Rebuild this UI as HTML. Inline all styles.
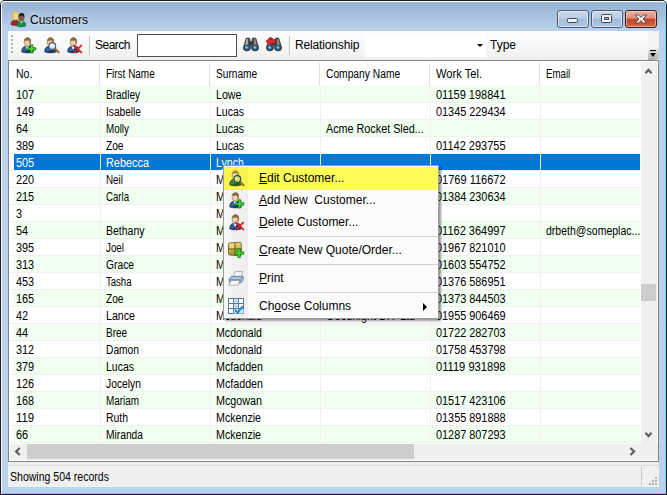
<!DOCTYPE html>
<html><head><meta charset="utf-8"><title>Customers</title>
<style>
html,body{margin:0;padding:0;}
body{width:667px;height:495px;overflow:hidden;background:#fff;font-family:"Liberation Sans",sans-serif;font-size:12px;color:#000;position:relative;}
*{box-sizing:border-box;}
.ic{position:absolute;overflow:visible;}
#win{position:absolute;left:0;top:0;width:667px;height:495px;background:#1c1c1c;border-radius:5px 5px 0 0;overflow:hidden;}
#frame{position:absolute;left:1px;top:1px;width:665px;height:493px;border-radius:4px 4px 0 0;background:linear-gradient(180deg,#97b3d4 0,#9fbad9 8px,#a9c2df 16px,#b3cce8 24px,#b9d2ec 30px,#bad2eb 100%);}
#frame:before{content:"";position:absolute;left:0;top:0;right:0;bottom:0;border-radius:4px 4px 0 0;border-top:1px solid #fff;border-left:1px solid #fdfeff;border-right:1px solid #6fdcff;border-bottom:1px solid #52d6ff;}
#title{position:absolute;left:30px;top:12px;font-size:12px;line-height:16px;color:#000;text-shadow:0 0 6px rgba(255,255,255,.75),0 0 10px rgba(255,255,255,.5);}
.tb{position:absolute;top:10px;height:18px;width:32px;border:1px solid #4b5a72;border-radius:3px;background:linear-gradient(180deg,#c6d7ec 0,#bccfe8 45%,#a3bcdb 50%,#adc5e1 100%);box-shadow:inset 0 0 0 1px rgba(255,255,255,.55);}
#bclose{background:linear-gradient(180deg,#e8b3a4 0,#dc8f7b 45%,#c3431f 50%,#cd6a4c 100%);border-color:#431a1c;width:32px;box-shadow:inset 0 0 0 1px rgba(255,220,210,.55);}
#client{position:absolute;left:8px;top:31px;width:651px;height:456px;background:#f0f0f0;}
#toolbar{position:absolute;left:0;top:0;width:651px;height:29px;background:linear-gradient(180deg,#fdfdfd 0,#f8f8f8 50%,#efefef 100%);}
.tsep{position:absolute;top:5px;width:2px;height:19px;border-left:1px solid #c2c2c2;border-right:1px solid #fff;}
.tl{position:absolute;top:6px;line-height:16px;font-size:12px;white-space:nowrap;}
#grid{position:absolute;left:0;top:29px;width:651px;height:402px;border:1px solid #7f848c;background:#fff;overflow:hidden;font-size:12px;}
#hdr{position:absolute;left:0;top:0;width:632px;height:25px;background:#fff;}
.h{position:absolute;top:0;height:25px;line-height:27px;padding-left:6px;white-space:nowrap;overflow:hidden;}
.h:after{content:"";position:absolute;right:0;top:2px;bottom:0;width:1px;background:#dfdfdf;}
.r{position:absolute;left:0;width:632px;height:17px;border-bottom:1px solid #f0f0f0;background:#fff;}
.r.g .c{background:#f0fff0;}
.r.sel .c{background:#0078d7;color:#fff;border-right-color:#e9e9e9;}
.c{position:absolute;top:0;height:16px;line-height:19px;padding-left:5px;white-space:nowrap;overflow:hidden;border-right:1px solid #f0f0f0;}
.t{display:inline-block;transform:scaleX(.85);transform-origin:0 50%;white-space:nowrap;}
.h0{left:0;width:91px;}
.h1{left:91px;width:110px;}
.h2{left:201px;width:110px;}
.h3{left:311px;width:110px;}
.h4{left:421px;width:110px;}
.h5{left:531px;width:100px;}
.h5:after{display:none;}
.c0{left:5px;width:87px;}
.c1{left:92px;width:110px;}
.c2{left:202px;width:110px;}
.c3{left:312px;width:110px;}
.c4{left:422px;width:110px;}
.c5{left:532px;width:99px;border-right:0 !important;}
.c0{padding-left:2px;}
.c0 .t,.c4 .t{transform:scaleX(.91);}
.h0{padding-left:7px;}
#vs{position:absolute;left:632px;top:1px;width:16px;height:381px;background:#f0f0f0;}
#hs{position:absolute;left:1px;top:383px;width:631px;height:16px;background:#f0f0f0;}
#corner{position:absolute;left:632px;top:382px;width:17px;height:17px;background:#f0f0f0;}
#status{position:absolute;left:0;top:434px;width:651px;height:22px;border-top:1px solid #d9d9d9;font-size:12px;line-height:22px;padding-left:2px;}
#menu{position:absolute;left:223px;top:165px;width:216px;height:154px;background:#fcfcfc;border:1px solid #9a9a9a;box-shadow:2px 2px 2px rgba(0,0,0,.4);}
#mw{position:absolute;left:0;top:1px;width:214px;height:151px;}
#gutter{position:absolute;left:0;top:0;width:24px;height:151px;background:linear-gradient(90deg,#f9f9f9 0,#f1f1f1 40%,#eeeeee 100%);}
.mi{position:absolute;left:35px;height:22px;line-height:22px;font-size:12px;white-space:nowrap;}
.sep{position:absolute;left:32px;width:182px;height:1px;background:#d2d2d2;}
#hl{position:absolute;left:0;top:0;width:214px;height:23px;background:linear-gradient(90deg,#f7f54d 0,#f7f54d 24px,#fefc56 24px,#fefc56 100%);}
u{text-decoration:underline;text-underline-offset:1px;}
</style></head><body>
<div id="win"><div id="frame"></div>
<svg class="ic" style="left:10px;top:11px" width="16" height="16" viewBox="0 0 16 16" ><path d="M1 13.6C.8 11 2 9.6 4.2 9.2L7 9.2C8.6 9.6 9.6 11 9.4 13.6C7 14.8 3 14.8 1 13.6Z" fill="#a3262a" stroke="#6a1216" stroke-width=".5"/><path d="M2.6 7.8C2 3.6 3 .8 5.6 .8C8 .8 9 3.4 8.6 7.6C8 9.2 3.2 9.4 2.6 7.8Z" fill="#f2d45a" stroke="#b8962a" stroke-width=".4"/><ellipse cx="6.3" cy="5.6" rx="1.9" ry="2.6" fill="#f3d2ae"/><path d="M6.6 15C6.4 12 8 10.6 10 10.2L12.8 10.2C14.8 10.6 16 12 15.8 15C13 16.2 9 16.2 6.6 15Z" fill="#1f8a4a" stroke="#0e5428" stroke-width=".5"/><path d="M10 10.3L11.4 12.6L12.8 10.3Z" fill="#e9f5ec"/><ellipse cx="11.5" cy="6.6" rx="2.7" ry="3.3" fill="#8a5a3a" stroke="#3a2414" stroke-width=".4"/><path d="M8.6 6.2C8.4 3.2 10 2 11.8 2C13.8 2 14.8 3.6 14.4 6C13.4 4.8 11.4 4.4 10 4.8C9.4 5.2 9 5.6 8.6 6.2Z" fill="#1c1a18"/></svg>
<div id="title">Customers</div>
<div class="tb" style="left:557px"><div style="position:absolute;left:9px;top:7px;width:11px;height:5px;border:1px solid #3d4656;border-radius:1.5px;background:#f4efec"></div></div>
<div class="tb" style="left:591px"><div style="position:absolute;left:9px;top:3px;width:11px;height:9px;border:1px solid #3d4656;border-radius:1.5px;background:#f6f6f6"><div style="position:absolute;left:2px;top:2px;width:5px;height:3px;border:1px solid #44506a;background:#8fb0de"></div></div></div>
<div class="tb" id="bclose" style="left:625px"><svg class="ic" style="left:8px;top:3px" width="14" height="10" viewBox="0 0 14 10"><path d="M1.2 1h3.4L7 3.3L9.4 1h3.4L9 5l3.8 4H9.4L7 6.7L4.600 9H1.2L5 5Z" fill="#f6f6f6" stroke="#4a3a3a" stroke-width=".9" stroke-linejoin="round"/></svg></div>
<div id="client">
 <div id="toolbar">
  <div style="position:absolute;left:3px;top:4px;width:2px;height:20px;background:repeating-linear-gradient(180deg,#b3b3b3 0,#b3b3b3 2px,transparent 2px,transparent 4px)"></div>
  <svg class="ic" style="left:13px;top:6px" width="16" height="16" viewBox="0 0 16 16" ><path d="M.7 14.9C.4 11.6 2.2 9.6 4.8 9.1L8.6 9.1C11.2 9.6 12.7 11.6 12.4 14.9C9 16.3 4 16.3 .7 14.9Z" fill="#143c6e" stroke="#0d2949" stroke-width=".5"/><path d="M1.3 14.2C1.2 12 2.4 10.4 4.2 9.8L5.4 13.6C4 14.6 2.6 14.6 1.3 14.2Z" fill="#4a86bd" opacity=".55"/><path d="M4.4 9.2L6.2 13.4L8 9.2Z" fill="#f6f8fb"/><ellipse cx="6.4" cy="4.9" rx="3.2" ry="4.1" fill="#efd2aa" stroke="#7a5c38" stroke-width=".6"/><path d="M3.3 4.2C3.2 1.6 4.8 .6 6.6 .6C8.800 .6 10 2.2 9.7 4.8C9.6 6.2 9.3 7.2 8.6 8C8.800 6.400 8.6 4.6 8 3.4C6.6 3.6 4.6 3.4 3.3 4.2Z" fill="#84683a"/><path d="M9.600 7.800h2.2v3h3v2.2h-3v3h-2.2v-3h-3v-2.2h3z" fill="#48dc30" stroke="#1b7a16" stroke-width=".9" stroke-linejoin="round"/></svg><svg class="ic" style="left:36px;top:6px" width="16" height="16" viewBox="0 0 16 16" ><path d="M.7 14.9C.4 11.6 2.2 9.6 4.8 9.1L8.6 9.1C11.2 9.6 12.7 11.6 12.4 14.9C9 16.3 4 16.3 .7 14.9Z" fill="#143c6e" stroke="#0d2949" stroke-width=".5"/><path d="M1.3 14.2C1.2 12 2.4 10.4 4.2 9.8L5.4 13.6C4 14.6 2.6 14.6 1.3 14.2Z" fill="#4a86bd" opacity=".55"/><path d="M4.4 9.2L6.2 13.4L8 9.2Z" fill="#f6f8fb"/><ellipse cx="6.4" cy="4.9" rx="3.2" ry="4.1" fill="#efd2aa" stroke="#7a5c38" stroke-width=".6"/><path d="M3.3 4.2C3.2 1.6 4.8 .6 6.6 .6C8.800 .6 10 2.2 9.7 4.8C9.6 6.2 9.3 7.2 8.6 8C8.800 6.400 8.6 4.6 8 3.4C6.6 3.6 4.6 3.4 3.3 4.2Z" fill="#84683a"/><path d="M10.6 11.6L14.6 15.2" stroke="#9a6a2e" stroke-width="2.1" stroke-linecap="round"/><circle cx="8.3" cy="9" r="3.4" fill="#d6eaf8" stroke="#4d5a68" stroke-width="1.1"/><circle cx="7.6" cy="8.2" r="1.5" fill="#fff" opacity=".85"/></svg><svg class="ic" style="left:59px;top:6px" width="16" height="16" viewBox="0 0 16 16" ><path d="M.7 14.9C.4 11.6 2.2 9.6 4.8 9.1L8.6 9.1C11.2 9.6 12.7 11.6 12.4 14.9C9 16.3 4 16.3 .7 14.9Z" fill="#143c6e" stroke="#0d2949" stroke-width=".5"/><path d="M1.3 14.2C1.2 12 2.4 10.4 4.2 9.8L5.4 13.6C4 14.6 2.6 14.6 1.3 14.2Z" fill="#4a86bd" opacity=".55"/><path d="M4.4 9.2L6.2 13.4L8 9.2Z" fill="#f6f8fb"/><ellipse cx="6.4" cy="4.9" rx="3.2" ry="4.1" fill="#efd2aa" stroke="#7a5c38" stroke-width=".6"/><path d="M3.3 4.2C3.2 1.6 4.8 .6 6.6 .6C8.800 .6 10 2.2 9.7 4.8C9.6 6.2 9.3 7.2 8.6 8C8.800 6.400 8.6 4.6 8 3.4C6.6 3.6 4.6 3.4 3.3 4.2Z" fill="#84683a"/><path d="M6.800 8.600L14.4 15.4M14.2 8.600L7 15.4" stroke="#df2029" stroke-width="1.9" stroke-linecap="round"/></svg><svg class="ic" style="left:235px;top:6px" width="16" height="16" viewBox="0 0 16 16" ><path d="M6.600 4.200H9.400V8.200H6.600Z" fill="#3a3a3a"/><path d="M3 1.800Q3.100 1 4 1H5.800Q6.700 1 6.800 1.800L7.600 10.600Q7.600 14 3.900 14Q.2 14 .3 10.600Z" fill="#4a4a48" stroke="#262624" stroke-width=".6"/><path d="M13 1.800Q12.900 1 12 1H10.200Q9.300 1 9.200 1.800L8.400 10.600Q8.400 14 12.100 14Q15.800 14 15.700 10.600Z" fill="#4a4a48" stroke="#262624" stroke-width=".6"/><path d="M3.700 2L2.200 8.200Q3.400 7.400 4.600 7.800L5 2Z" fill="#d2d2cc" opacity=".85"/><path d="M11 2L11.400 7.800Q12.600 7.400 13.800 8.200L12.300 2Z" fill="#a6a6a0" opacity=".8"/><circle cx="3.900" cy="10.800" r="2.300" fill="#2a80c4" stroke="#173f66" stroke-width=".6"/><circle cx="12.100" cy="10.800" r="2.300" fill="#2a80c4" stroke="#173f66" stroke-width=".6"/><circle cx="3.500" cy="10.300" r="1.100" fill="#8fd2fb"/><circle cx="11.700" cy="10.300" r="1.100" fill="#8fd2fb"/></svg><svg class="ic" style="left:258px;top:6px" width="16" height="16" viewBox="0 0 16 16" ><path d="M6.600 4.200H9.400V8.200H6.600Z" fill="#3a3a3a"/><path d="M3 1.800Q3.100 1 4 1H5.800Q6.700 1 6.800 1.800L7.600 10.600Q7.600 14 3.900 14Q.2 14 .3 10.600Z" fill="#4a4a48" stroke="#262624" stroke-width=".6"/><path d="M13 1.800Q12.900 1 12 1H10.200Q9.300 1 9.200 1.800L8.400 10.600Q8.400 14 12.100 14Q15.800 14 15.700 10.600Z" fill="#4a4a48" stroke="#262624" stroke-width=".6"/><path d="M3.700 2L2.200 8.200Q3.400 7.400 4.600 7.800L5 2Z" fill="#d2d2cc" opacity=".85"/><path d="M11 2L11.400 7.800Q12.600 7.400 13.800 8.200L12.300 2Z" fill="#a6a6a0" opacity=".8"/><circle cx="3.900" cy="10.800" r="2.300" fill="#2a80c4" stroke="#173f66" stroke-width=".6"/><circle cx="12.100" cy="10.800" r="2.300" fill="#2a80c4" stroke="#173f66" stroke-width=".6"/><circle cx="3.500" cy="10.300" r="1.100" fill="#8fd2fb"/><circle cx="11.700" cy="10.300" r="1.100" fill="#8fd2fb"/><path d="M-.2 4.300L4.400 .2V2.500H9V6.200H4.400V8.400Z" fill="#e3262d" stroke="#a0141a" stroke-width=".6"/></svg>
  <div class="tsep" style="left:81px"></div>
  <div class="tl" style="left:87px;letter-spacing:-.5px">Search</div>
  <div style="position:absolute;left:129px;top:3px;width:100px;height:23px;border:1px solid #4d4d4d;background:#fff"></div>
  <div class="tsep" style="left:281px"></div>
  <div class="tl" style="left:287px;letter-spacing:-.15px">Relationship</div>
  <div style="position:absolute;left:357px;top:3px;width:121px;height:23px;background:#fff"></div>
  <div style="position:absolute;left:469px;top:13px;width:0;height:0;border-left:3px solid transparent;border-right:3px solid transparent;border-top:3px solid #000"></div>
  <div class="tl" style="left:482px">Type</div>
  <div style="position:absolute;left:640px;top:0;width:11px;height:29px;background:#f3f3f3"></div>
  <div style="position:absolute;left:640px;top:18px;width:11px;height:11px;background:linear-gradient(180deg,#e4e4e4,#b0b0b0);border-radius:3px 0 4px 0"></div>
  <div style="position:absolute;left:642px;top:19px;width:6px;height:1px;background:#000"></div>
  <div style="position:absolute;left:642px;top:22px;width:0;height:0;border-left:3px solid transparent;border-right:3px solid transparent;border-top:4px solid #000"></div>
 </div>
 <div id="grid">
  <div id="hdr">
   <div class="h h0"><span class="t" style="transform:scaleX(0.877)">No.</span></div><div class="h h1"><span class="t" style="transform:scaleX(0.830)">First Name</span></div><div class="h h2"><span class="t" style="transform:scaleX(0.846)">Surname</span></div><div class="h h3"><span class="t" style="transform:scaleX(0.855)">Company Name</span></div><div class="h h4"><span class="t" style="transform:scaleX(0.928)">Work Tel.</span></div><div class="h h5"><span class="t" style="transform:scaleX(0.809)">Email</span></div>
  </div>
<div class="r g" style="top:25px"><div class="c c0"><span class="t" style="transform:scaleX(0.906)">107</span></div><div class="c c1"><span class="t" style="transform:scaleX(0.836)">Bradley</span></div><div class="c c2"><span class="t" style="transform:scaleX(0.889)">Lowe</span></div><div class="c c3"></div><div class="c c4"><span class="t" style="transform:scaleX(0.917)">01159 198841</span></div><div class="c c5"></div></div>
<div class="r" style="top:42px"><div class="c c0"><span class="t" style="transform:scaleX(0.906)">149</span></div><div class="c c1"><span class="t" style="transform:scaleX(0.846)">Isabelle</span></div><div class="c c2"><span class="t" style="transform:scaleX(0.874)">Lucas</span></div><div class="c c3"></div><div class="c c4"><span class="t" style="transform:scaleX(0.906)">01345 229434</span></div><div class="c c5"></div></div>
<div class="r g" style="top:59px"><div class="c c0"><span class="t" style="transform:scaleX(0.906)">64</span></div><div class="c c1"><span class="t" style="transform:scaleX(0.821)">Molly</span></div><div class="c c2"><span class="t" style="transform:scaleX(0.874)">Lucas</span></div><div class="c c3"><span class="t" style="transform:scaleX(0.899)">Acme Rocket Sled...</span></div><div class="c c4"></div><div class="c c5"></div></div>
<div class="r" style="top:76px"><div class="c c0"><span class="t" style="transform:scaleX(0.906)">389</span></div><div class="c c1"><span class="t" style="transform:scaleX(0.846)">Zoe</span></div><div class="c c2"><span class="t" style="transform:scaleX(0.874)">Lucas</span></div><div class="c c3"></div><div class="c c4"><span class="t" style="transform:scaleX(0.917)">01142 293755</span></div><div class="c c5"></div></div>
<div class="r g sel" style="top:93px"><div class="c c0"><span class="t" style="transform:scaleX(0.906)">505</span></div><div class="c c1"><span class="t" style="transform:scaleX(0.908)">Rebecca</span></div><div class="c c2"><span class="t" style="transform:scaleX(0.887)">Lynch</span></div><div class="c c3"></div><div class="c c4"></div><div class="c c5"></div></div>
<div class="r" style="top:110px"><div class="c c0"><span class="t" style="transform:scaleX(0.906)">220</span></div><div class="c c1"><span class="t" style="transform:scaleX(0.822)">Neil</span></div><div class="c c2"><span class="t" style="transform:scaleX(0.884)">Mcdonald</span></div><div class="c c3"></div><div class="c c4"><span class="t" style="transform:scaleX(0.917)">01769 116672</span></div><div class="c c5"></div></div>
<div class="r g" style="top:127px"><div class="c c0"><span class="t" style="transform:scaleX(0.906)">215</span></div><div class="c c1"><span class="t" style="transform:scaleX(0.802)">Carla</span></div><div class="c c2"><span class="t" style="transform:scaleX(0.884)">Mcdonald</span></div><div class="c c3"></div><div class="c c4"><span class="t" style="transform:scaleX(0.906)">01384 230634</span></div><div class="c c5"></div></div>
<div class="r" style="top:144px"><div class="c c0"><span class="t" style="transform:scaleX(0.904)">3</span></div><div class="c c1"></div><div class="c c2"><span class="t" style="transform:scaleX(0.884)">Mcdonald</span></div><div class="c c3"></div><div class="c c4"></div><div class="c c5"></div></div>
<div class="r g" style="top:161px"><div class="c c0"><span class="t" style="transform:scaleX(0.906)">54</span></div><div class="c c1"><span class="t" style="transform:scaleX(0.874)">Bethany</span></div><div class="c c2"><span class="t" style="transform:scaleX(0.884)">Mcdonald</span></div><div class="c c3"></div><div class="c c4"><span class="t" style="transform:scaleX(0.917)">01162 364997</span></div><div class="c c5"><span class="t" style="transform:scaleX(0.877)">drbeth@someplac...</span></div></div>
<div class="r" style="top:178px"><div class="c c0"><span class="t" style="transform:scaleX(0.906)">395</span></div><div class="c c1"><span class="t" style="transform:scaleX(0.817)">Joel</span></div><div class="c c2"><span class="t" style="transform:scaleX(0.884)">Mcdonald</span></div><div class="c c3"></div><div class="c c4"><span class="t" style="transform:scaleX(0.906)">01967 821010</span></div><div class="c c5"></div></div>
<div class="r g" style="top:195px"><div class="c c0"><span class="t" style="transform:scaleX(0.906)">313</span></div><div class="c c1"><span class="t" style="transform:scaleX(0.857)">Grace</span></div><div class="c c2"><span class="t" style="transform:scaleX(0.884)">Mcdonald</span></div><div class="c c3"></div><div class="c c4"><span class="t" style="transform:scaleX(0.906)">01603 554752</span></div><div class="c c5"></div></div>
<div class="r" style="top:212px"><div class="c c0"><span class="t" style="transform:scaleX(0.906)">453</span></div><div class="c c1"><span class="t" style="transform:scaleX(0.796)">Tasha</span></div><div class="c c2"><span class="t" style="transform:scaleX(0.884)">Mcdonald</span></div><div class="c c3"></div><div class="c c4"><span class="t" style="transform:scaleX(0.906)">01376 586951</span></div><div class="c c5"></div></div>
<div class="r g" style="top:229px"><div class="c c0"><span class="t" style="transform:scaleX(0.906)">165</span></div><div class="c c1"><span class="t" style="transform:scaleX(0.846)">Zoe</span></div><div class="c c2"><span class="t" style="transform:scaleX(0.884)">Mcdonald</span></div><div class="c c3"></div><div class="c c4"><span class="t" style="transform:scaleX(0.906)">01373 844503</span></div><div class="c c5"></div></div>
<div class="r" style="top:246px"><div class="c c0"><span class="t" style="transform:scaleX(0.906)">42</span></div><div class="c c1"><span class="t" style="transform:scaleX(0.887)">Lance</span></div><div class="c c2"><span class="t" style="transform:scaleX(0.884)">Mcdonald</span></div><div class="c c3"><span class="t" style="transform:scaleX(0.903)">Goodnight DIY Ltd</span></div><div class="c c4"><span class="t" style="transform:scaleX(0.906)">01955 906469</span></div><div class="c c5"></div></div>
<div class="r g" style="top:263px"><div class="c c0"><span class="t" style="transform:scaleX(0.906)">44</span></div><div class="c c1"><span class="t" style="transform:scaleX(0.828)">Bree</span></div><div class="c c2"><span class="t" style="transform:scaleX(0.884)">Mcdonald</span></div><div class="c c3"></div><div class="c c4"><span class="t" style="transform:scaleX(0.906)">01722 282703</span></div><div class="c c5"></div></div>
<div class="r" style="top:280px"><div class="c c0"><span class="t" style="transform:scaleX(0.906)">312</span></div><div class="c c1"><span class="t" style="transform:scaleX(0.853)">Damon</span></div><div class="c c2"><span class="t" style="transform:scaleX(0.884)">Mcdonald</span></div><div class="c c3"></div><div class="c c4"><span class="t" style="transform:scaleX(0.906)">01758 453798</span></div><div class="c c5"></div></div>
<div class="r g" style="top:297px"><div class="c c0"><span class="t" style="transform:scaleX(0.906)">379</span></div><div class="c c1"><span class="t" style="transform:scaleX(0.874)">Lucas</span></div><div class="c c2"><span class="t" style="transform:scaleX(0.892)">Mcfadden</span></div><div class="c c3"></div><div class="c c4"><span class="t" style="transform:scaleX(0.928)">01119 931898</span></div><div class="c c5"></div></div>
<div class="r" style="top:314px"><div class="c c0"><span class="t" style="transform:scaleX(0.906)">126</span></div><div class="c c1"><span class="t" style="transform:scaleX(0.860)">Jocelyn</span></div><div class="c c2"><span class="t" style="transform:scaleX(0.892)">Mcfadden</span></div><div class="c c3"></div><div class="c c4"></div><div class="c c5"></div></div>
<div class="r g" style="top:331px"><div class="c c0"><span class="t" style="transform:scaleX(0.906)">168</span></div><div class="c c1"><span class="t" style="transform:scaleX(0.825)">Mariam</span></div><div class="c c2"><span class="t" style="transform:scaleX(0.896)">Mcgowan</span></div><div class="c c3"></div><div class="c c4"><span class="t" style="transform:scaleX(0.906)">01517 423106</span></div><div class="c c5"></div></div>
<div class="r" style="top:348px"><div class="c c0"><span class="t" style="transform:scaleX(0.948)">119</span></div><div class="c c1"><span class="t" style="transform:scaleX(0.868)">Ruth</span></div><div class="c c2"><span class="t" style="transform:scaleX(0.888)">Mckenzie</span></div><div class="c c3"></div><div class="c c4"><span class="t" style="transform:scaleX(0.906)">01355 891888</span></div><div class="c c5"></div></div>
<div class="r g" style="top:365px"><div class="c c0"><span class="t" style="transform:scaleX(0.906)">66</span></div><div class="c c1"><span class="t" style="transform:scaleX(0.853)">Miranda</span></div><div class="c c2"><span class="t" style="transform:scaleX(0.888)">Mckenzie</span></div><div class="c c3"></div><div class="c c4"><span class="t" style="transform:scaleX(0.906)">01287 807293</span></div><div class="c c5"></div></div>
  <div id="vs">
   <svg class="ic" style="left:0;top:0" width="16" height="17" viewBox="0 0 16 17"><path d="M4.500 11.3L7.5 7.8L10.5 11.3" fill="none" stroke="#5c5c5c" stroke-width="2.1"/></svg>
   <svg class="ic" style="left:0;top:364px" width="16" height="17" viewBox="0 0 16 17"><path d="M4.500 6.700L7.5 10.2L10.5 6.700" fill="none" stroke="#5c5c5c" stroke-width="2.1"/></svg>
   <div style="position:absolute;left:0;top:222px;width:15px;height:17px;background:#cdcdcd"></div>
  </div>
  <div id="hs">
   <svg class="ic" style="left:-1px;top:-1px" width="17" height="17" viewBox="0 0 17 17"><path d="M10.8 5.100L7.100 8.500L10.8 11.900" fill="none" stroke="#5c5c5c" stroke-width="2.1"/></svg>
   <svg class="ic" style="left:614px;top:-1px" width="17" height="17" viewBox="0 0 17 17"><path d="M6.400 5.100L10.100 8.500L6.400 11.900" fill="none" stroke="#5c5c5c" stroke-width="2.1"/></svg>
   <div style="position:absolute;left:17px;top:0;width:387px;height:15px;background:#cdcdcd"></div>
  </div>
  <div id="corner"></div>
 </div>
 <div id="status"><span class="t" style="transform:scaleX(.878)">Showing 504 records</span></div>
 <div style="position:absolute;left:633px;top:436px;width:1px;height:19px;background:#c6c6c6"></div>
 <svg class="ic" style="left:640px;top:445px" width="10" height="10" viewBox="0 0 10 10"><g fill="#b4b4b4"><rect x="7" y="1" width="2" height="2"/><rect x="4" y="4" width="2" height="2"/><rect x="7" y="4" width="2" height="2"/><rect x="1" y="7" width="2" height="2"/><rect x="4" y="7" width="2" height="2"/><rect x="7" y="7" width="2" height="2"/></g></svg>
</div>
<div id="menu"><div id="mw">
 <div id="gutter"></div>
 <div id="hl"></div>
 <svg class="ic" style="left:5px;top:3px" width="16" height="16" viewBox="0 0 16 16" ><path d="M.7 14.9C.4 11.6 2.2 9.6 4.8 9.1L8.6 9.1C11.2 9.6 12.7 11.6 12.4 14.9C9 16.3 4 16.3 .7 14.9Z" fill="#1f5c28" stroke="#123a18" stroke-width=".5"/><path d="M1.3 14.2C1.2 12 2.4 10.4 4.2 9.8L5.4 13.6C4 14.6 2.6 14.6 1.3 14.2Z" fill="#5fae5a" opacity=".55"/><path d="M4.4 9.2L6.2 13.4L8 9.2Z" fill="#f6f8fb"/><ellipse cx="6.4" cy="4.9" rx="3.2" ry="4.1" fill="#f3e2a0" stroke="#7a5c38" stroke-width=".6"/><path d="M3.3 4.2C3.2 1.6 4.8 .6 6.6 .6C8.800 .6 10 2.2 9.7 4.8C9.6 6.2 9.3 7.2 8.6 8C8.800 6.400 8.6 4.6 8 3.4C6.6 3.6 4.6 3.4 3.3 4.2Z" fill="#a8903a"/><path d="M10.6 11.6L14.6 15.2" stroke="#9a6a2e" stroke-width="2.1" stroke-linecap="round"/><circle cx="8.3" cy="9" r="3.4" fill="#c3dc52" stroke="#2a3f6a" stroke-width="1.1"/><circle cx="7.6" cy="8.2" r="1.5" fill="#eef7a8" opacity=".85"/></svg><svg class="ic" style="left:5px;top:25px" width="16" height="16" viewBox="0 0 16 16" ><path d="M.7 14.9C.4 11.6 2.2 9.6 4.8 9.1L8.6 9.1C11.2 9.6 12.7 11.6 12.4 14.9C9 16.3 4 16.3 .7 14.9Z" fill="#143c6e" stroke="#0d2949" stroke-width=".5"/><path d="M1.3 14.2C1.2 12 2.4 10.4 4.2 9.8L5.4 13.6C4 14.6 2.6 14.6 1.3 14.2Z" fill="#4a86bd" opacity=".55"/><path d="M4.4 9.2L6.2 13.4L8 9.2Z" fill="#f6f8fb"/><ellipse cx="6.4" cy="4.9" rx="3.2" ry="4.1" fill="#efd2aa" stroke="#7a5c38" stroke-width=".6"/><path d="M3.3 4.2C3.2 1.6 4.8 .6 6.6 .6C8.800 .6 10 2.2 9.7 4.8C9.6 6.2 9.3 7.2 8.6 8C8.800 6.400 8.6 4.6 8 3.4C6.6 3.6 4.6 3.4 3.3 4.2Z" fill="#84683a"/><path d="M9.600 7.800h2.2v3h3v2.2h-3v3h-2.2v-3h-3v-2.2h3z" fill="#48dc30" stroke="#1b7a16" stroke-width=".9" stroke-linejoin="round"/></svg><svg class="ic" style="left:5px;top:47px" width="16" height="16" viewBox="0 0 16 16" ><path d="M.7 14.9C.4 11.6 2.2 9.6 4.8 9.1L8.6 9.1C11.2 9.6 12.7 11.6 12.4 14.9C9 16.3 4 16.3 .7 14.9Z" fill="#143c6e" stroke="#0d2949" stroke-width=".5"/><path d="M1.3 14.2C1.2 12 2.4 10.4 4.2 9.8L5.4 13.6C4 14.6 2.6 14.6 1.3 14.2Z" fill="#4a86bd" opacity=".55"/><path d="M4.4 9.2L6.2 13.4L8 9.2Z" fill="#f6f8fb"/><ellipse cx="6.4" cy="4.9" rx="3.2" ry="4.1" fill="#efd2aa" stroke="#7a5c38" stroke-width=".6"/><path d="M3.3 4.2C3.2 1.6 4.8 .6 6.6 .6C8.800 .6 10 2.2 9.7 4.8C9.6 6.2 9.3 7.2 8.6 8C8.800 6.400 8.6 4.6 8 3.4C6.6 3.6 4.6 3.4 3.3 4.2Z" fill="#84683a"/><path d="M6.800 8.600L14.4 15.4M14.2 8.600L7 15.4" stroke="#df2029" stroke-width="1.9" stroke-linecap="round"/></svg><svg class="ic" style="left:4px;top:75px" width="16" height="16" viewBox="0 0 16 16" ><defs><linearGradient id="bx" x1="0" y1="0" x2="0" y2="1"><stop offset="0" stop-color="#e6d57a"/><stop offset=".5" stop-color="#cdb348"/><stop offset="1" stop-color="#a58c2a"/></linearGradient></defs><path d="M.5 2.200Q.5 1 1.700 .9L12 .3Q13.4 .3 13.4 1.700V12.300Q13.4 13.700 12 13.700L1.700 13.100Q.5 13 .5 11.800Z" fill="url(#bx)" stroke="#6a5a18" stroke-width=".8"/><path d="M6.900 .6V13.400M.5 7H13.4" stroke="#5f5016" stroke-width=".9" fill="none"/><path d="M1.300 2.400Q1.300 1.700 2.100 1.700L6.100 1.400V6.200H1.300Z" fill="#f3e9a6" opacity=".55"/><path d="M9.900 6.600h2.400v3.300h3.300v2.400h-3.300v3.300h-2.400v-3.300h-3.300v-2.400h3.300z" fill="#48dc30" stroke="#1b7a16" stroke-width=".9" stroke-linejoin="round"/></svg><svg class="ic" style="left:4px;top:103px" width="16" height="16" viewBox="0 0 16 16" ><path d="M5.2 6.800L7 1.600H14.6L13 6.800Z" fill="#f4f6f8" stroke="#7c838c" stroke-width=".6"/><path d="M1 9.400L3.400 6.400H15L15.4 9.800L13 12.800H1.400Z" fill="#a9c9ea" stroke="#46607e" stroke-width=".7"/><path d="M1 9.400H13.2L15 6.400" stroke="#46607e" stroke-width=".5" fill="none"/><path d="M1.2 9.600H13.100L13 12.600H1.400Z" fill="#7f9dbd"/><path d="M2 12.800L3.200 10.600H11.600L10.400 14.800L.8 15.200Z" fill="#fdfdfd" stroke="#7c838c" stroke-width=".6"/></svg><svg class="ic" style="left:4px;top:131px" width="16" height="16" viewBox="0 0 16 16" ><rect x=".5" y=".5" width="15" height="15" fill="#fff" stroke="#557a9e" stroke-width="1"/><path d="M5.5 .5V15.5M10.5 .5V15.5M.5 5.5H15.5M.5 10.5H15.5" stroke="#557a9e" stroke-width="1"/><rect x="6.5" y="1.5" width="3" height="3" fill="#a9cdf0"/><rect x="6.5" y="6.5" width="3" height="3" fill="#a9cdf0"/><rect x="6" y="11" width="9.5" height="4.5" fill="#cfe2f5"/><path d="M7.2 11.8L9.6 14.6L14.8 8.2" stroke="#2b84d8" stroke-width="2" fill="none"/></svg>
 <div class="mi" style="top:0px"><u>E</u>dit Customer...</div>
 <div class="mi" style="top:22px"><u>A</u>dd New&nbsp; Customer...</div>
 <div class="mi" style="top:44px"><u>D</u>elete Customer...</div>
 <div class="sep" style="top:69px"></div>
 <div class="mi" style="top:72px"><u>C</u>reate New Quote/Order...</div>
 <div class="sep" style="top:97px"></div>
 <div class="mi" style="top:100px"><u>P</u>rint</div>
 <div class="sep" style="top:125px"></div>
 <div class="mi" style="top:128px">Ch<u>o</u>ose Columns</div>
 <div style="position:absolute;left:199px;top:136px;width:0;height:0;border-top:4px solid transparent;border-bottom:4px solid transparent;border-left:4px solid #000"></div>
</div></div>
</div>
</body></html>
